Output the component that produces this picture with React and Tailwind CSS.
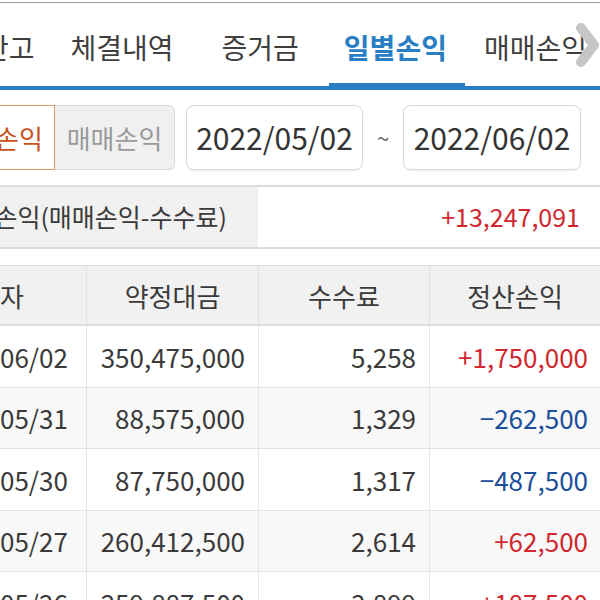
const TABS = [
  { label: "잔고", pl: "pl-[13px]", pr: "pr-[18px]" },
  { label: "체결내역", pl: "pl-[18px]", pr: "pr-[25px]" },
  { label: "증거금", pl: "pl-[23px]", pr: "pr-[30px]" },
  { label: "일별손익", pl: "pl-[15px]", pr: "pr-[18px]", active: true },
  { label: "매매손익", pl: "pl-[19px]", pr: "pr-[40px]" },
];

const ROWS = [
  { date: "2022/06/02", amount: "350,475,000", fee: "5,258", pl: "+1,750,000" },
  { date: "2022/05/31", amount: "88,575,000", fee: "1,329", pl: "−262,500" },
  { date: "2022/05/30", amount: "87,750,000", fee: "1,317", pl: "−487,500" },
  { date: "2022/05/27", amount: "260,412,500", fee: "2,614", pl: "+62,500" },
  { date: "2022/05/26", amount: "259,887,500", fee: "3,899", pl: "+187,500" },
];

function Chevron() {
  return (
    <svg width="26" height="44" viewBox="0 0 26 44" fill="none">
      <polyline
        points="7,5 20,22 7,39"
        stroke="#c6c6c8"
        strokeWidth="10"
        strokeLinejoin="round"
        strokeLinecap="round"
      />
    </svg>
  );
}

export default function App() {
  return (
    <div className="w-[600px] h-[600px] overflow-hidden bg-white font-['Noto_Sans_CJK_KR',sans-serif] text-[#3a3a3a]">
      {/* Tab bar */}
      <div className="relative mt-[2px] border-t border-[#9a9a9a]">
        <div className="flex ml-[-30px] whitespace-nowrap">
          {TABS.map((t) => (
            <div
              key={t.label}
              className={`shrink-0 h-[87px] flex items-center text-[28px] ${t.pl} ${t.pr} ${
                t.active
                  ? "border-b-[7px] border-[#2a7fc4] pt-[8px] text-[#2a7fc4] font-bold"
                  : "border-b-4 border-[#2a7fc4] pt-[5px] text-[#3f3f3f]"
              }`}
            >
              {t.label}
            </div>
          ))}
        </div>
        <div className="absolute right-0 top-[20px]">
          <Chevron />
        </div>
      </div>

      {/* Filter row */}
      <div className="flex mt-[15px] h-[65px] ml-[-65px] whitespace-nowrap">
        <div className="w-[120px] shrink-0 flex items-center justify-center border border-[#e39a68] bg-white text-[26px] text-[#c9521c]">
          일별손익
        </div>
        <div className="w-[120px] shrink-0 flex items-center justify-center border border-l-0 border-[#dadada] bg-[#f0f0f0] rounded-r-[6px] text-[26px] text-[#9a9a9a]">
          매매손익
        </div>
        <div className="ml-[11px] w-[177px] shrink-0 flex items-center justify-center border border-[#dadada] rounded-[8px] shadow-[0_1px_2px_rgba(0,0,0,0.08)] text-[30px] text-[#333]">
          2022/05/02
        </div>
        <div className="w-[40px] shrink-0 flex items-center justify-center text-[22px] text-[#666]">
          ~
        </div>
        <div className="w-[178px] shrink-0 flex items-center justify-center border border-[#dadada] rounded-[8px] shadow-[0_1px_2px_rgba(0,0,0,0.08)] text-[30px] text-[#333]">
          2022/06/02
        </div>
      </div>

      {/* Summary */}
      <div className="mt-[15px] h-[64px] flex border-t-2 border-b-2 border-[#dcdcdc] whitespace-nowrap">
        <div className="w-[258px] shrink-0 overflow-hidden flex items-center justify-end pr-[31px] bg-[#f1f1f1] text-[25px] text-[#3a3a3a]">
          정산손익(매매손익-수수료)
        </div>
        <div className="flex-1 flex items-center justify-end pr-[20px] text-[25px] text-[#d0282e]">
          +13,247,091
        </div>
      </div>

      {/* Table */}
      <div className="mt-[16px] ml-[-86px] w-[686px]">
        <div className="grid grid-cols-[172px_172px_171px_171px] h-[61px] bg-[#f1f1f1] border-t border-b-2 border-[#dcdcdc] text-[26px] text-[#3a3a3a]">
          <div className="flex items-center justify-center">일자</div>
          <div className="flex items-center justify-center border-l border-[#e2e2e2]">약정대금</div>
          <div className="flex items-center justify-center border-l border-[#e2e2e2]">수수료</div>
          <div className="flex items-center justify-center border-l border-[#e2e2e2]">정산손익</div>
        </div>
        {ROWS.map((r, i) => (
          <div
            key={r.date}
            className={`grid grid-cols-[172px_172px_171px_171px] h-[61.5px] border-b border-[#e4e4e4] text-[26px] ${
              i % 2 === 1 ? "bg-[#f8f8f8]" : "bg-white"
            }`}
          >
            <div className="flex items-center justify-center text-[#3a3a3a]">{r.date}</div>
            <div className="flex items-center justify-end pr-[13px] border-l border-[#e6e6e6] text-[#3a3a3a]">
              {r.amount}
            </div>
            <div className="flex items-center justify-end pr-[13px] border-l border-[#e6e6e6] text-[#3a3a3a]">
              {r.fee}
            </div>
            <div
              className={`flex items-center justify-end pr-[12px] border-l border-[#e6e6e6] ${
                r.pl.startsWith("+") ? "text-[#d0282e]" : "text-[#1b4f9c]"
              }`}
            >
              {r.pl}
            </div>
          </div>
        ))}
      </div>
    </div>
  );
}
